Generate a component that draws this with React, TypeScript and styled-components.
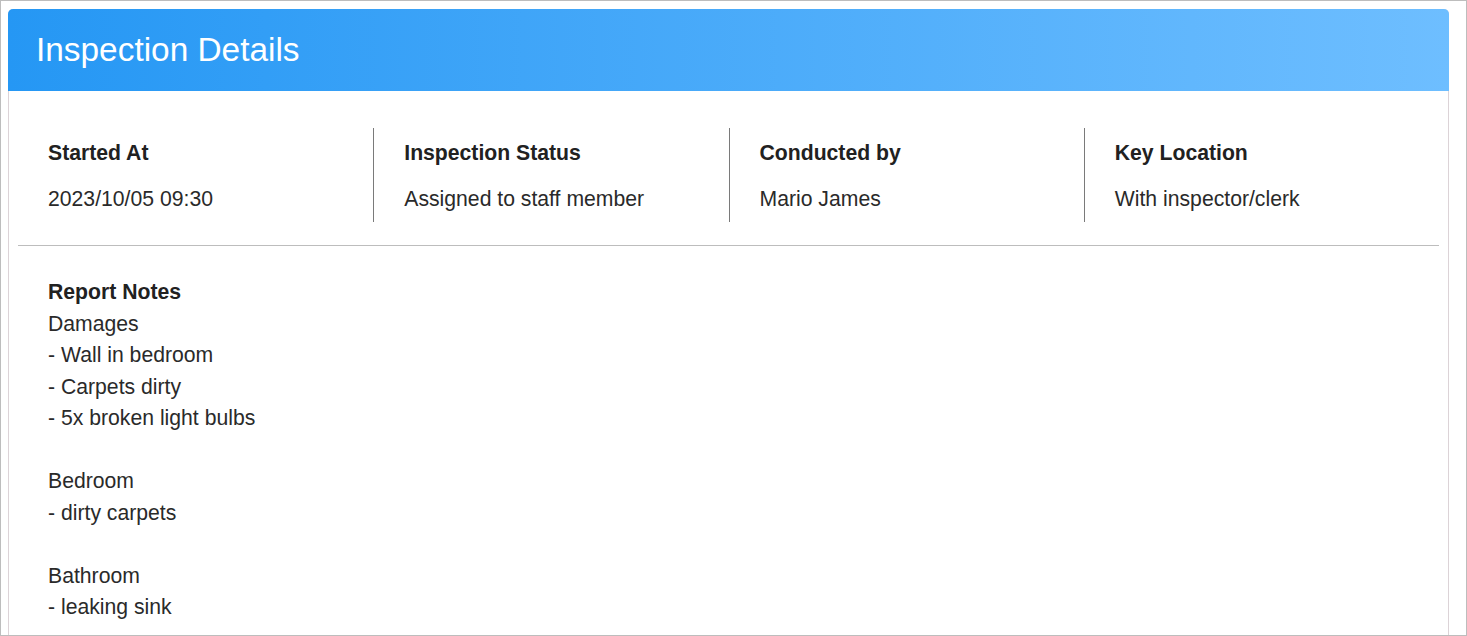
import React from "react";
import styled, { createGlobalStyle } from "styled-components";

const Global = createGlobalStyle`
  html, body { margin: 0; padding: 0; background: #fff; }
  body { font-family: "Liberation Sans", Arial, sans-serif; }
  * { box-sizing: border-box; }
`;

const Frame = styled.div`
  height: 636px;
  border: 1px solid #bdbdbd;
  padding: 8px 17px 0 7px;
  overflow: hidden;
`;

const Card = styled.section`
  border: 1px solid #dcd3d7;
  border-top: 0;
  border-radius: 5px 5px 0 0;
  background: #fff;
`;

const Header = styled.header`
  margin: 0 -1px;
  height: 82px;
  border-radius: 5px 5px 0 0;
  background: linear-gradient(90deg, #2597f4 0%, #6ebeff 100%);
  display: flex;
  align-items: center;
  padding: 0 28px;
`;

const Title = styled.h1`
  margin: 0;
  font-size: 33.4px;
  font-weight: 400;
  color: #fff;
`;

const Body = styled.div`
  padding: 0 9px;
`;

const Stats = styled.div`
  display: grid;
  grid-template-columns: repeat(4, 1fr);
  padding: 37px 0 23px;
  border-bottom: 1px solid #bdbdbd;
`;

const Stat = styled.div<{ $first?: boolean }>`
  padding: 9px 30px 8px;
  border-left: ${(p) => (p.$first ? "none" : "1px solid #7a7a7a")};
  display: flex;
  flex-direction: column;
  gap: 14px;
`;

const Label = styled.div`
  font-size: 21.2px;
  font-weight: 700;
  line-height: 31.5px;
  color: #212121;
`;

const Value = styled.div`
  font-size: 21.2px;
  line-height: 31.5px;
  color: #2a2a2a;
`;

const Notes = styled.div`
  padding: 30px 30px 60px;
`;

const NotesTitle = styled.div`
  font-size: 21.2px;
  font-weight: 700;
  line-height: 31.5px;
  color: #212121;
`;

const NotesText = styled.div`
  font-size: 21.2px;
  line-height: 31.5px;
  color: #2a2a2a;
  white-space: pre-line;
`;

const stats = [
  { label: "Started At", value: "2023/10/05 09:30" },
  { label: "Inspection Status", value: "Assigned to staff member" },
  { label: "Conducted by", value: "Mario James" },
  { label: "Key Location", value: "With inspector/clerk" },
];

const notes = `Damages
- Wall in bedroom
- Carpets dirty
- 5x broken light bulbs

Bedroom
- dirty carpets

Bathroom
- leaking sink`;

export default function App() {
  return (
    <>
      <Global />
      <Frame>
        <Card>
          <Header>
            <Title>Inspection Details</Title>
          </Header>
          <Body>
            <Stats>
              {stats.map((s, i) => (
                <Stat key={s.label} $first={i === 0}>
                  <Label>{s.label}</Label>
                  <Value>{s.value}</Value>
                </Stat>
              ))}
            </Stats>
            <Notes>
              <NotesTitle>Report Notes</NotesTitle>
              <NotesText>{notes}</NotesText>
            </Notes>
          </Body>
        </Card>
      </Frame>
    </>
  );
}
